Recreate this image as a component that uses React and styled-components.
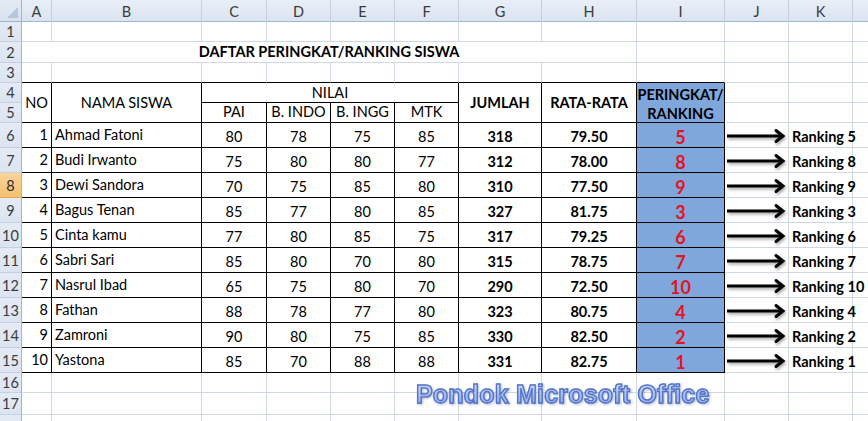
import React from "react";
import styled, { createGlobalStyle } from "styled-components";

const COLS = [22, 30, 150, 65, 64, 64, 64, 83, 95, 88, 64, 64, 64];
const LETTERS = ["A", "B", "C", "D", "E", "F", "G", "H", "I", "J", "K", "L"];

const siswa = [
  [1, "Ahmad Fatoni", 80, 78, 75, 85, 318, "79.50", 5],
  [2, "Budi Irwanto", 75, 80, 80, 77, 312, "78.00", 8],
  [3, "Dewi Sandora", 70, 75, 85, 80, 310, "77.50", 9],
  [4, "Bagus Tenan", 85, 77, 80, 85, 327, "81.75", 3],
  [5, "Cinta kamu", 77, 80, 85, 75, 317, "79.25", 6],
  [6, "Sabri Sari", 85, 80, 70, 80, 315, "78.75", 7],
  [7, "Nasrul Ibad", 65, 75, 80, 70, 290, "72.50", 10],
  [8, "Fathan", 88, 78, 77, 80, 323, "80.75", 4],
  [9, "Zamroni", 90, 80, 75, 85, 330, "82.50", 2],
  [10, "Yastona", 85, 70, 88, 88, 331, "82.75", 1],
];

const GlobalStyle = createGlobalStyle`
  html, body {
    margin: 0;
    padding: 0;
    background: #fff;
    overflow: hidden;
  }
  body {
    font-family: "Lato", "Open Sans", sans-serif;
    font-size: 14.5px;
    color: #000;
  }
`;

const Wrap = styled.div`
  position: relative;
  width: 868px;
  height: 421px;
  overflow: hidden;
`;

const Sheet = styled.div`
  display: grid;
  grid-template-columns: ${COLS.map((c) => c + "px").join(" ")};
  grid-template-rows: 22px 20px 21px 20px 20px 20px repeat(10, 25px) 20px 22px 20px;
`;

const Corner = styled.div`
  position: relative;
  background: linear-gradient(#e4ebf5, #d7e1ee);
  border-right: 1px solid #9eb6ce;
  border-bottom: 1px solid #9eb6ce;
  &::after {
    content: "";
    position: absolute;
    right: 3px;
    bottom: 3px;
    border-left: 11px solid transparent;
    border-bottom: 11px solid #b5c6dc;
  }
`;

const ColHead = styled.div`
  display: flex;
  align-items: center;
  justify-content: center;
  padding-top: 2px;
  background: linear-gradient(#e9eff8, #dae3f0);
  border-right: 1px solid #c3d0e0;
  border-bottom: 1px solid #9eb6ce;
  color: #3b3b3b;
  font-size: 14.5px;
`;

const RowHead = styled.div`
  display: flex;
  align-items: center;
  justify-content: center;
  background: ${(p) =>
    p.$active ? "linear-gradient(#f9d49a, #f6c070)" : "linear-gradient(#e4ebf5, #dbe4f0)"};
  border-right: 1px solid ${(p) => (p.$active ? "#f0a550" : "#9eb6ce")};
  border-bottom: 1px solid ${(p) => (p.$active ? "#f0a550" : "#c3d0e0")};
  color: ${(p) => (p.$active ? "#2b2b2b" : "#3b3b3b")};
  font-size: 14.5px;
`;

const Cell = styled.div`
  grid-column: span ${(p) => p.$span || 1};
  grid-row: span ${(p) => p.$rspan || 1};
  display: flex;
  flex-direction: column;
  justify-content: ${(p) =>
    p.$valign === "center" ? "center" : p.$valign === "top" ? "flex-start" : "flex-end"};
  align-items: ${(p) =>
    p.$align === "left" ? "flex-start" : p.$align === "right" ? "flex-end" : "center"};
  padding: 0 3px ${(p) => (p.$valign === "center" ? "0" : "1px")};
  line-height: 18px;
  white-space: nowrap;
  overflow: visible;
  font-weight: ${(p) => (p.$bold ? 700 : 400)};
  font-size: ${(p) => p.$size || "14.5px"};
  color: ${(p) => p.$color || "#000"};
  background: ${(p) => p.$fill || "transparent"};
  border-right: 1px solid ${(p) => (p.$br ? "#000" : "#d0d7e5")};
  border-bottom: 1px solid ${(p) => (p.$bb ? "#000" : "#d0d7e5")};
  box-sizing: border-box;
`;

const HeadLines = styled(Cell)`
  line-height: 19px;
  padding-top: 2px;
`;

const ArrowCell = styled(Cell)`
  align-items: flex-start;
  justify-content: flex-start;
  padding: 0;
`;

const Watermark = styled.div`
  position: absolute;
  left: 416px;
  top: 380px;
  font-family: "Liberation Sans", Arial, sans-serif;
  font-weight: 700;
  font-size: 25px;
  letter-spacing: 0.2px;
  white-space: nowrap;
  background: linear-gradient(#dde6f8, #a3baee 60%, #8eaae6);
  -webkit-background-clip: text;
  background-clip: text;
  color: transparent;
  -webkit-text-stroke: 1.4px #5474c9;
  filter: drop-shadow(1px 1px 1px rgba(60, 80, 140, 0.35));
`;

const Arrow = () => (
  <svg width="62" height="24" viewBox="0 0 62 24" style={{ filter: "drop-shadow(1px 2px 1.5px rgba(0,0,0,0.35))" }}>
    <line x1="2" y1="13" x2="57" y2="13" stroke="#000" strokeWidth="3" />
    <polyline points="51,7.5 58,13 51,18.5" fill="none" stroke="#000" strokeWidth="3" strokeLinecap="round" strokeLinejoin="miter" />
  </svg>
);

const plainRow = (n, from = 0) =>
  LETTERS.slice(from).map((l) => <Cell key={n + l} />);

const BLUE = "#80a7dc";
const RED = "#e11423";

export default function App() {
  return (
    <Wrap>
      <GlobalStyle />
      <Sheet>
        <Corner />
        {LETTERS.map((l) => (
          <ColHead key={l}>{l === "L" ? "" : l}</ColHead>
        ))}

        <RowHead>1</RowHead>
        {plainRow(1)}

        <RowHead>2</RowHead>
        <Cell $span={8} $bold>
          DAFTAR PERINGKAT/RANKING SISWA
        </Cell>
        {plainRow(2, 8)}

        <RowHead>3</RowHead>
        {LETTERS.map((l, i) => (
          <Cell key={"3" + l} $bb={i < 9} />
        ))}

        <RowHead>4</RowHead>
        <Cell $rspan={2} $br $bb $valign="center">NO</Cell>
        <Cell $rspan={2} $br $bb $valign="center">NAMA SISWA</Cell>
        <Cell $span={4} $br $bb $valign="center">NILAI</Cell>
        <Cell $rspan={2} $br $bb $bold $valign="center">JUMLAH</Cell>
        <Cell $rspan={2} $br $bb $bold $valign="center">RATA-RATA</Cell>
        <HeadLines $rspan={2} $br $bb $bold $fill={BLUE} $valign="center">
          <span>PERINGKAT/</span>
          <span>RANKING</span>
        </HeadLines>
        <Cell />
        <Cell />
        <Cell />

        <RowHead>5</RowHead>
        <Cell $br $bb>PAI</Cell>
        <Cell $br $bb>B. INDO</Cell>
        <Cell $br $bb>B. INGG</Cell>
        <Cell $br $bb>MTK</Cell>
        <Cell />
        <Cell />
        <Cell />

        {siswa.map((s, i) => (
          <React.Fragment key={s[0]}>
            <RowHead $active={i === 2}>{i + 6}</RowHead>
            <Cell $br $bb $align="right" $valign="center">{s[0]}</Cell>
            <Cell $br $bb $align="left" $valign="center">{s[1]}</Cell>
            <Cell $br $bb>{s[2]}</Cell>
            <Cell $br $bb>{s[3]}</Cell>
            <Cell $br $bb>{s[4]}</Cell>
            <Cell $br $bb>{s[5]}</Cell>
            <Cell $br $bb $bold>{s[6]}</Cell>
            <Cell $br $bb $bold>{s[7]}</Cell>
            <Cell $br $bb $bold $fill={BLUE} $color={RED} $size="18px">
              {s[8]}
            </Cell>
            <ArrowCell>
              <Arrow />
            </ArrowCell>
            <Cell $align="left" $bold>Ranking {s[8]}</Cell>
            <Cell />
          </React.Fragment>
        ))}

        <RowHead>16</RowHead>
        {plainRow(16)}
        <RowHead>17</RowHead>
        {plainRow(17)}
        <RowHead />
        {plainRow(18)}
      </Sheet>
      <Watermark>Pondok Microsoft Office</Watermark>
    </Wrap>
  );
}
